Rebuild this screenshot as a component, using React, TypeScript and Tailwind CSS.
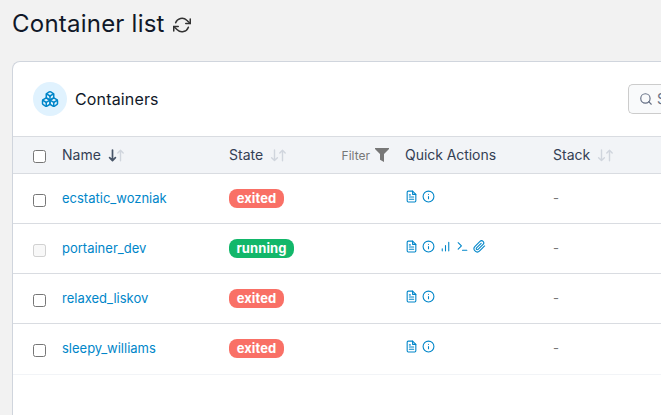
import React from "react";
import { Boxes } from "lucide-react";

type IconProps = { className?: string; children: React.ReactNode; width?: number };

function Icon({ className = "", children, width = 2 }: IconProps) {
  return (
    <svg viewBox="0 0 24 24" fill="none" stroke="currentColor" strokeWidth={width} strokeLinecap="round" strokeLinejoin="round" className={`shrink-0 ${className}`}>
      {children}
    </svg>
  );
}

function SortArrows({ active = false }: { active?: boolean }) {
  return (
    <svg viewBox="0 0 17 13" fill="none" strokeWidth="1.4" strokeLinecap="round" strokeLinejoin="round" className="h-[13px] w-[17px] shrink-0">
      <path d="M12.5 11.8V1.2M9.8 3.9l2.7-2.7 2.7 2.7" stroke="#d0d5dd" />
      <path d="M4.5 1v10.5M1.6 8.7l2.9 2.9 2.9-2.9" stroke={active ? "#475467" : "#d0d5dd"} strokeWidth={active ? 1.7 : 1.4} />
    </svg>
  );
}

function QuickActions({ running }: { running: boolean }) {
  return (
    <div className="flex items-center gap-[4px] text-[#0086c9]">
      <Icon className="size-[13px]">
        <path d="M14 2H6a2 2 0 0 0-2 2v16a2 2 0 0 0 2 2h12a2 2 0 0 0 2-2V8z" />
        <path d="M14 2v6h6M16 13H8M16 17H8M10 9H8" />
      </Icon>
      <Icon className="size-[13px]">
        <circle cx="12" cy="12" r="10" />
        <path d="M12 16v-4M12 8h.01" />
      </Icon>
      {running && (
        <>
          <Icon className="size-[13px]">
            <path d="M12 20V10M18 20V4M6 20v-4" />
          </Icon>
          <Icon className="size-[13px]">
            <path d="m4 17 6-6-6-6M12 19h8" />
          </Icon>
          <Icon className="size-[13px]">
            <path d="m21.44 11.05-9.19 9.19a6 6 0 0 1-8.49-8.49l9.19-9.19a4 4 0 0 1 5.66 5.66l-9.2 9.19a2 2 0 0 1-2.83-2.83l8.49-8.48" />
          </Icon>
        </>
      )}
    </div>
  );
}

const containers = [
  { name: "ecstatic_wozniak", state: "exited" },
  { name: "portainer_dev", state: "running" },
  { name: "relaxed_liskov", state: "exited" },
  { name: "sleepy_williams", state: "exited" },
];

const columns = "grid grid-cols-[29px_167px_176px_148px_1fr] pl-5";

export default function App() {
  return (
    <div className="flex h-[415px] w-[661px] flex-col overflow-hidden bg-[#f2f2f2] font-['Inter',sans-serif] text-[#344054]">
      <header className="flex h-[61px] shrink-0 items-start pt-[7px] pl-3">
        <h1 className="text-2xl leading-[34px] font-normal tracking-[0.23px] text-[#101828]">Container list</h1>
        <Icon className="mt-[9px] ml-2 size-[18px] text-[#333]">
          <path d="M23 4v6h-6M1 20v-6h6" />
          <path d="M3.51 9a9 9 0 0 1 14.85-3.36L23 10M1 14l4.64 4.36A9 9 0 0 0 20.49 15" />
        </Icon>
      </header>
      <main className="ml-3 flex grow flex-col rounded-tl-lg border-t border-l border-[#d0d5dd] bg-white">
        <div className="flex h-[74px] shrink-0 items-center justify-between pl-5">
          <div className="flex items-center gap-2">
            <div className="flex size-[34px] items-center justify-center rounded-full bg-[#e0f2fe] text-[#0086c9]">
              <Boxes className="size-[18px]" />
            </div>
            <h2 className="text-base font-normal tracking-[0.15px] text-[#101828]">Containers</h2>
          </div>
          <div className="flex h-[30px] w-[33px] items-center gap-1 overflow-hidden rounded-l-[5px] border border-r-0 border-[#ccc] bg-[#f9fafb] pl-[10px] text-sm text-[#667085]">
            <Icon className="size-[14px]">
              <circle cx="11" cy="11" r="8" />
              <path d="m21 21-4.35-4.35" />
            </Icon>
            <span>S</span>
          </div>
        </div>
        <div className={`${columns} h-[38px] shrink-0 border-y border-[#d9dce1] bg-[#f2f4f7] text-sm`}>
          <input type="checkbox" className="mt-[13px] size-[13px]" />
          <div className="flex h-9 items-center gap-[7px]">Name <SortArrows active /></div>
          <div className="flex h-9 items-center justify-between pr-4">
            <div className="flex items-center gap-[7px]">State <SortArrows /></div>
            <div className="flex items-center gap-[5px] text-xs text-[#777]">
              <span className="pt-px">Filter</span>
              <svg viewBox="0 0 14 14" className="size-[14px] fill-[#777]"><path d="M0 0h14v1L9 6v8L5 11.8V6L0 1z" /></svg>
            </div>
          </div>
          <div className="flex h-9 items-center tracking-[-0.05px]">Quick Actions</div>
          <div className="flex h-9 items-center gap-[7px]">Stack <SortArrows /></div>
        </div>
        {containers.map(({ name, state }, index) => (
          <div key={name} className={`${columns} shrink-0 border-b text-[13px] ${index === 3 ? "h-[51px] border-[#f2f4f7]" : "h-[50px] border-[#d9dce1]"}`}>
            <input type="checkbox" disabled={state === "running"} className="mt-5 size-[13px]" />
            <a className="mt-[14px] leading-5 whitespace-nowrap text-[#0086c9]">{name}</a>
            <div className="pt-[15px]">
              <span className={`flex h-[19px] items-center justify-center rounded-[8px] text-[13px] font-bold tracking-[0.1px] text-white ${state === "running" ? "w-[65px] bg-[#12b76a]" : "w-[55px] bg-[#f97066]"}`}>{state}</span>
            </div>
            <div className="pt-4"><QuickActions running={state === "running"} /></div>
            <span className="pt-[14px] leading-5 text-[#777]">-</span>
          </div>
        ))}
      </main>
    </div>
  );
}
